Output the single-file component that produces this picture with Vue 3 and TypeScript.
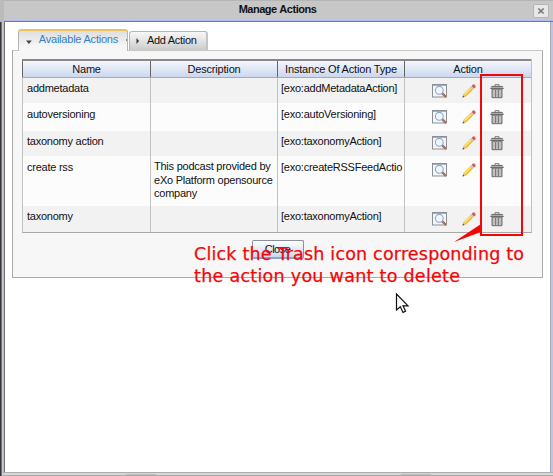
<script setup lang="ts">
interface ActionRow {
  name: string
  description: string[]
  type: string
  height: number
  textTop: number
  iconTop: number
}

const headers: string[] = ['Name', 'Description', 'Instance Of Action Type', 'Action']

const rows: ActionRow[] = [
  { name: 'addmetadata', description: [], type: '[exo:addMetadataAction]', height: 25, textTop: 3, iconTop: 6 },
  { name: 'autoversioning', description: [], type: '[exo:autoVersioning]', height: 28, textTop: 4, iconTop: 7 },
  { name: 'taxonomy action', description: [], type: '[exo:taxonomyAction]', height: 25, textTop: 3, iconTop: 5 },
  {
    name: 'create rss',
    description: ['This podcast provided by', 'eXo Platform opensource', 'company'],
    type: '[exo:createRSSFeedActio',
    height: 50,
    textTop: 4,
    iconTop: 7,
  },
  { name: 'taxonomy', description: [], type: '[exo:taxonomyAction]', height: 26, textTop: 3, iconTop: 6 },
]
</script>

<template>
  <div class="window">
    <header class="titlebar">
      <h1>Manage Actions</h1>
      <button class="close-x" aria-label="Close window">
        <svg width="8" height="8" viewBox="0 0 8 8"><path d="M1.3 1.5 6.7 6.5M6.7 1.5 1.3 6.5" stroke="#777" stroke-width="1.7" /></svg>
      </button>
    </header>
    <main class="content">
      <nav class="tabs">
        <div class="tab active">
          <svg class="arrow" width="6" height="4" viewBox="0 0 6 4"><path d="M0 .5H6L3 4Z" fill="#444" /></svg>
          <span>Available Actions</span><i class="dot"></i>
        </div>
        <div class="tab idle">
          <svg class="arrow" width="4" height="6" viewBox="0 0 4 6"><path d="M.5 0V6L3 3Z" fill="#333" /></svg>
          <span>Add Action</span>
        </div>
      </nav>
      <section class="panel">
        <div class="table">
          <div class="head">
            <div v-for="h in headers" :key="h" class="th">{{ h }}</div>
          </div>
          <div v-for="(r, i) in rows" :key="i" class="row" :style="{ height: r.height + 'px', '--text-top': r.textTop + 'px', '--icon-top': r.iconTop + 'px' }">
            <div class="td">{{ r.name }}</div>
            <div class="td desc"><div v-for="line in r.description" :key="line">{{ line }}</div></div>
            <div class="td type">{{ r.type }}</div>
            <div class="td icons">
              <svg class="view" width="16" height="14" viewBox="0 0 16 14">
                <rect x=".5" y=".5" width="14" height="12.5" fill="#f4f5f7" stroke="#8b8f94" />
                <path d="M1 1.5H14" stroke="#a9afb5" />
                <circle cx="7.3" cy="6.3" r="3.9" fill="#f1f7ff" stroke="#88a9d0" stroke-width="1.1" />
                <path d="M10.3 9.3 14 13" stroke="#a57454" stroke-width="2.4" />
              </svg>
              <svg class="pencil" width="14" height="14" viewBox="0 0 14 14">
                <path d="M.7 13.2 1.7 9.7 8.7 2.7 11.3 5.3 4.3 12.3Z" fill="#f2b925" />
                <path d="M2 10 9 3 10.2 4.2 3.2 11.2Z" fill="#ffe36b" />
                <path d="M.7 13.2 1.7 9.7 4.3 12.3Z" fill="#d9c7a3" />
                <path d="M.5 13.5 1.1 11.5 2.5 12.9Z" fill="#444" />
                <path d="M8 3.4 9.5 1.9 12.1 4.5 10.6 6Z" fill="#c7c9cc" />
                <path d="M9.5 1.9 11 .5Q12 0 13 1T13.4 3.2L12.1 4.5Z" fill="#d95b52" />
              </svg>
              <svg class="trash" width="14" height="15" viewBox="0 0 14 15">
                <path d="M5 2V.7H9V2" fill="none" stroke="#777" />
                <path d="M1.3 2H12.7L13.8 4.5H.2Z" fill="#aaa" />
                <path d="M1.5 2.4H12.5M.3 4.5H13.7" stroke="#666" stroke-width=".9" />
                <path d="M2 5H12V13.7H2Z" fill="#aaa" stroke="#666" stroke-width=".9" />
                <path d="M4 6V13M10 6V13" stroke="#d5d5d5" />
                <path d="M5.5 6V13M8.5 6V13" stroke="#777" stroke-width=".9" />
                <path d="M7 6V13" stroke="#c4c4c4" />
              </svg>
            </div>
          </div>
        </div>
        <button class="close">Close</button>
      </section>
    </main>
    <footer class="status"><i></i><i></i></footer>
    <svg class="markup" width="553" height="476" viewBox="0 0 553 476">
      <rect x="481" y="75" width="41" height="160" fill="none" stroke="#f00808" stroke-width="2" />
      <path d="M454 242 481 224V232Z" fill="#f00808" />
      <text x="194" y="260" textLength="330">Click the Trash icon corresponding to</text>
      <text x="194" y="282" textLength="266">the action you want to delete</text>
      <path d="M396.5 294V310L400.3 306.7 403 312.4 405.6 311.2 403 305.8H408Z" fill="#fff" stroke="#111" stroke-width="1.2" />
    </svg>
  </div>
</template>

<style>
body { margin: 0; background: #fff; overflow: hidden; }
</style>

<style scoped>
* { box-sizing: border-box; }
.window {
  position: relative; width: 553px; height: 476px; display: flex; flex-direction: column;
  background: linear-gradient(90deg, #35343a 0 1px, #77747a 1px 2px, #c9c6c8 2px 3px, #b9baec 3px 4px, #707078 4px 5px, #fff 5px 550px, #aaa 550px 551px, #bdc2f1 551px);
  font-family: "Liberation Sans", Arial, sans-serif; font-size: 11px; letter-spacing: -.24px; color: #111;
}
.titlebar {
  height: 22px; flex: none; display: flex; align-items: center; justify-content: flex-end;
  margin-left: 4px; padding: 0 4px 0 0; background: #c7c7c7; border-top: 1px solid #b5b5b5;
  border-bottom: 1px solid #777988; box-shadow: inset 0 -1px #b2bbef, -4px 0 #bbb;
}
h1 { margin: 0; flex: 1; padding: 0 0 4px 18px; text-align: center; font-size: 11px; line-height: 14px; letter-spacing: -.48px; word-spacing: .5px; }
.close-x { width: 16px; height: 14px; padding: 0; margin-top: -1px; display: flex; align-items: center; justify-content: center; border: 1px solid #b5b5b5; border-radius: 2px; background: #e8e8e8; }
.content { flex: 1; padding: 7px 10px 0 12px; }
.tabs { display: flex; align-items: flex-end; height: 21px; padding-left: 6px; gap: 1px; position: relative; }
.tab { display: flex; align-items: center; white-space: nowrap; border: 1px solid #b5b5b5; border-bottom: 0; border-radius: 3px 3px 0 0; }
.active { width: 110px; height: 22px; margin-bottom: -1px; padding: 0 0 4px 7px; border-top: 2px solid #e8c25d; color: #3580c8; background: linear-gradient(#dedede, #f7f7f7 80%); }
.active .arrow { margin: 5px 7px 0 0; }
.active span { letter-spacing: -.22px; }
.dot { width: 1px; height: 2px; margin: 2px 0 0 8px; background: #888; }
.idle { width: 79px; height: 19px; padding: 0 0 2px 6px; background: linear-gradient(#f8f8f8, #ccc); border-right: 2px solid #c4c4c4; }
.idle .arrow { margin: 1px 7px 0 0; }
.idle span { letter-spacing: -.46px; }
.idle span { letter-spacing: -.3px; }
.panel { width: 531px; height: 228px; padding: 8px 10px 0 9px; border: 1px solid #aaa; border-top-color: #c7c7c7; background: #f7f7f7; display: flex; flex-direction: column; align-items: center; }
.table { width: 510px; border-bottom: 1px solid #aaa; border-right: 1px solid #c2c2c2; }
.head, .row { display: grid; grid-template-columns: 128px 127px 127px 127px; }
.head { height: 19px; border-top: 2px solid #888; border-bottom: 1px solid #aaa; background: linear-gradient(#f4f6fc, #ccd8ef); }
.th { border-left: 1px solid #666; text-align: center; line-height: 16px; letter-spacing: -.18px; white-space: nowrap; }
.row { background: #f2f2f2; }
.row:nth-child(odd) { background: #fcfcfc; }
.td { border-left: 1px solid #c2c2c2; padding: var(--text-top) 0 0 4px; line-height: 14px; white-space: nowrap; }
.desc { padding-left: 3px; line-height: 13.5px; }
.type { padding-left: 3px; }
.icons { display: flex; align-items: flex-start; padding: var(--icon-top) 0 0 27px; }
.pencil { margin-left: 14px; }
.trash { margin-left: 14px; }
.close { width: 52px; height: 19px; margin: 7px 0 0 1px; padding: 0 0 1px; border: 1px solid #8a9099; border-bottom: 2px solid #8aa4d3; border-radius: 2px; background: linear-gradient(#fff, #c9d7f0); font: 11px "Liberation Sans", Arial, sans-serif; letter-spacing: -.5px; color: #111; }
.status { display: flex; justify-content: space-around; align-items: center; height: 4px; margin-left: 3px; background: #d7d7d7; border-top: 1px solid #aaa; border-bottom: 1px solid #aaa; }
.status i { width: 30px; height: 1px; background: #bbb; }
.markup { position: absolute; inset: 0; pointer-events: none; }
.markup text { font-family: "DejaVu Sans", sans-serif; font-size: 17.5px; letter-spacing: 0; fill: #f00808; stroke: #f00808; stroke-width: .25px; }
</style>
